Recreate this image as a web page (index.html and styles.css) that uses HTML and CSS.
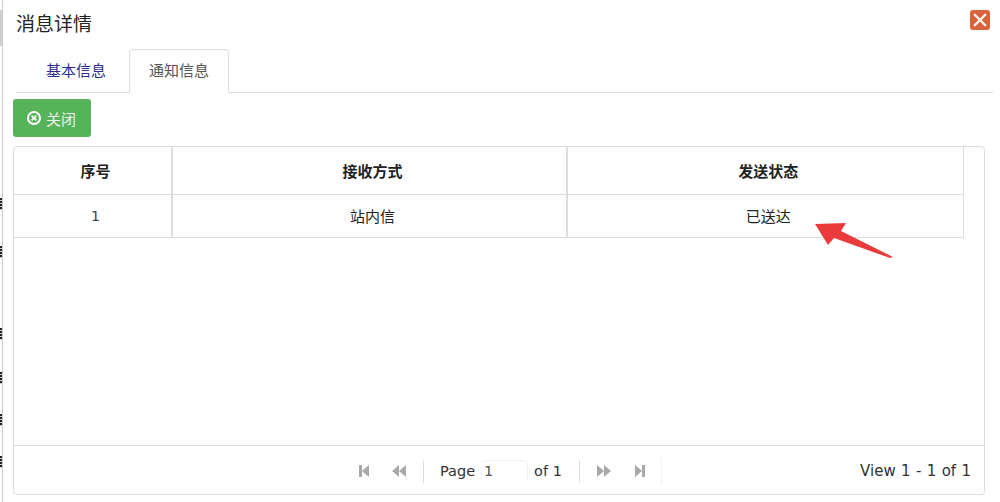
FILE: index.html
```html
<!DOCTYPE html>
<html lang="zh">
<head>
<meta charset="utf-8">
<title>消息详情</title>
<link rel="stylesheet" href="styles.css">
</head>
<body>
<div class="backdrop">
  <i class="bd-top"></i>
  <i class="bd-mark m1"></i><i class="bd-mark m2"></i><i class="bd-mark m3"></i><i class="bd-mark m4"></i><i class="bd-mark m5"></i><i class="bd-mark m6"></i>
</div>
<main class="dialog">
  <header class="dialog-head">
    <h1 class="dialog-title">消息详情</h1>
    <button class="close-x" aria-label="关闭">
      <svg width="20" height="20" viewBox="0 0 20 20"><rect x="0" y="0" width="20" height="20" rx="3" fill="#d9643c"/><path d="M5 5l10 10M15 5L5 15" stroke="#fdeee6" stroke-width="2.4" stroke-linecap="square"/></svg>
    </button>
  </header>
  <nav class="tabs">
    <a class="tab">基本信息</a>
    <a class="tab active">通知信息</a>
  </nav>
  <div class="toolbar">
    <button class="btn-close">
      <svg width="16" height="16" viewBox="0 0 16 16"><circle cx="8" cy="8" r="6" fill="none" stroke="#fff" stroke-width="2"/><path d="M5.6 5.6l4.8 4.8M10.4 5.6l-4.8 4.8" stroke="#fff" stroke-width="1.6"/></svg>
      <span>关闭</span>
    </button>
  </div>
  <section class="grid-box">
    <div class="grid-scroll">
      <table class="grid">
        <colgroup><col class="c1"><col class="c2"><col class="c3"></colgroup>
        <thead><tr><th>序号</th><th>接收方式</th><th>发送状态</th></tr></thead>
        <tbody><tr><td class="num">1</td><td>站内信</td><td>已送达</td></tr></tbody>
      </table>
    </div>
    <footer class="pager">
      <div class="pager-center">
        <svg class="pg-icon first" width="10" height="14" viewBox="0 0 10 14"><rect x="0" y="1" width="3" height="12"/><path d="M10 1v12L3 7z"/></svg>
        <svg class="pg-icon prev" width="14" height="12" viewBox="0 0 14 12"><path d="M7 0v12L0 6zM14 0v12L7 6z"/></svg>
        <span class="pg-sep"></span>
        <span class="pg-text">Page</span>
        <span class="pg-input">1</span>
        <span class="pg-text pg-of">of 1</span>
        <span class="pg-sep sep2"></span>
        <svg class="pg-icon next" width="14" height="12" viewBox="0 0 14 12"><path d="M0 0v12l7-6zM7 0v12l7-6z"/></svg>
        <svg class="pg-icon last" width="10" height="14" viewBox="0 0 10 14"><path d="M0 1v12l7-6z"/><rect x="7" y="1" width="3" height="12"/></svg>
        <span class="pg-sep sep3"></span>
      </div>
      <div class="pager-view">View 1 - 1 of 1</div>
    </footer>
  </section>
  <svg class="arrow" width="82" height="38" viewBox="0 0 82 38"><path d="M3 1L34 0L29 8L81 34L78 35L22 15L16 22Z" fill="#ea3a3c"/></svg>
</main>
</body>
</html>
```

FILE: styles.css
```css
* { box-sizing: border-box; }
html, body { margin: 0; height: 100%; }
body {
  display: flex;
  width: 1000px;
  height: 502px;
  overflow: hidden;
  background: #fff;
  font-family: "Open Sans", "Noto Sans CJK SC", sans-serif;
  color: #333;
}
.backdrop {
  position: relative;
  flex: 0 0 3px;
  background: #fff;
  border-right: 1px solid #c9c9c9;
}
.bd-top {
  position: absolute;
  left: 0;
  top: 10px;
  width: 2px;
  height: 36px;
  background: #cfcfcf;
}
.bd-mark {
  position: absolute;
  left: 0;
  width: 2px;
  height: 12px;
  background: repeating-linear-gradient(#222 0 2px, #cdd3da 2px 3px);
}
.m1 { top: 198px; }
.m2 { top: 246px; }
.m3 { top: 328px; }
.m4 { top: 372px; }
.m5 { top: 414px; }
.m6 { top: 456px; }
.dialog {
  position: relative;
  flex: 1;
  height: 502px;
  padding: 0 7px 0 10px;
  background: #fff;
}
.dialog-head {
  display: flex;
  justify-content: space-between;
  align-items: flex-start;
  height: 49px;
  padding-left: 3px;
}
.dialog-title {
  margin: 11px 0 0;
  font-size: 19px;
  line-height: 26px;
  font-weight: 400;
  color: #222;
}
.close-x {
  margin: 10px 3px 0 0;
  padding: 0;
  width: 20px;
  height: 20px;
  border: 0;
  background: none;
  display: block;
}
.tabs {
  display: flex;
  height: 44px;
  margin-left: 3px;
  padding-left: 11px;
  border-bottom: 1px solid #ddd;
}
.tab {
  width: 98px;
  height: 44px;
  margin-right: 4px;
  text-align: center;
  font-size: 15px;
  line-height: 41px;
  color: #2a2f8f;
  border: 1px solid transparent;
  border-radius: 4px 4px 0 0;
}
.tab.active {
  width: 100px;
  color: #555;
  background: #fff;
  border-color: #ddd #ddd #fff;
}
.toolbar { height: 53px; padding-top: 6px; }
.btn-close {
  display: flex;
  align-items: center;
  gap: 4px;
  width: 78px;
  height: 38px;
  padding: 0 0 0 13px;
  border: 0;
  border-radius: 3px;
  background: #57b35a;
  font: inherit;
  font-size: 15px;
  color: #eaf6ea;
}
.grid-box {
  display: flex;
  flex-direction: column;
  width: 972px;
  height: 349px;
  border: 1px solid #ddd;
  border-radius: 4px;
}
.grid-scroll { flex: 1; }
.grid {
  width: 949px;
  table-layout: fixed;
  border-collapse: collapse;
  font-size: 15px;
  color: #222;
}
.c1 { width: 158px; }
.c2 { width: 395px; }
.c3 { width: 396px; }
.grid th, .grid td {
  text-align: center;
  font-weight: 400;
  border-right: 2px solid #ddd;
  border-bottom: 1px solid #ddd;
  padding: 0 0 0 6px;
}
.grid th:last-child, .grid td:last-child { border-right-width: 1px; }
.grid th { height: 47px; font-weight: 700; }
.grid td { height: 43px; }
.grid .num { font-family: "DejaVu Sans", sans-serif; font-size: 14px; color: #444; padding-top: 1px; }
.pager {
  position: relative;
  height: 49px;
  flex: none;
  border-top: 1px solid #ddd;
  font-family: "DejaVu Sans", sans-serif;
  font-size: 14.5px;
  color: #333;
}
.pager-center {
  display: flex;
  align-items: center;
  height: 48px;
  padding: 2px 0 0 345px;
}
.pg-icon { fill: #a9a9a9; flex: none; }
.prev { margin-left: 23px; }
.pg-sep { width: 1px; height: 23px; background: #ddd; margin-left: 17px; }
.pg-text { margin-left: 16px; white-space: nowrap; }
.pg-input {
  width: 47px;
  height: 22px;
  margin-left: 6px;
  padding-left: 2px;
  line-height: 21px;
  border: 1px solid #f1f1f1;
  border-bottom-color: transparent;
  border-radius: 4px;
  color: #555;
}
.pg-of { margin-left: 6px; }
.sep2 { margin-left: 17px; }
.next { margin-left: 17px; }
.last { margin-left: 24px; }
.sep3 { margin-left: 16px; background: #f2f2f2; height: 26px; }
.pager-view {
  position: absolute;
  right: 13px;
  top: 16px;
  font-size: 15px;
  word-spacing: 0.6px;
  white-space: nowrap;
}
.arrow { position: absolute; left: 809px; top: 223px; }
```
